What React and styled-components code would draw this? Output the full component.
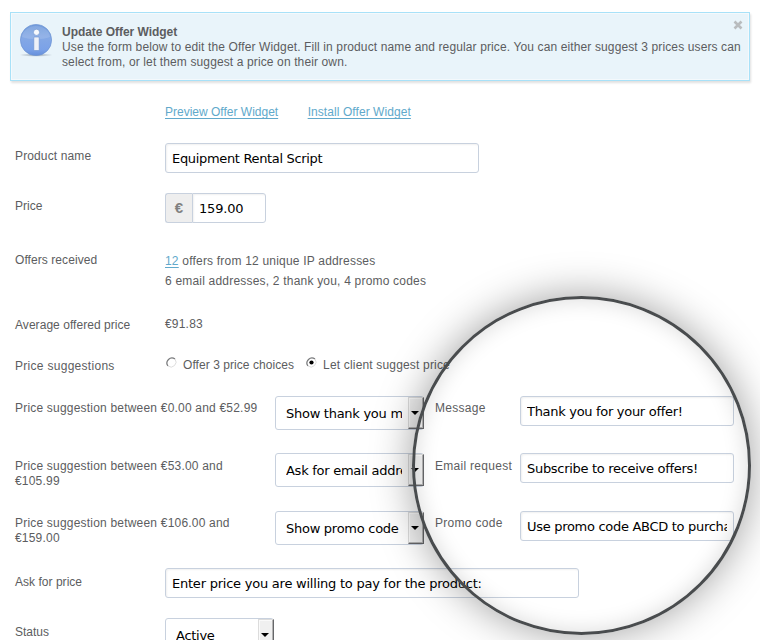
import React from 'react';
import styled, { createGlobalStyle } from 'styled-components';

const GlobalStyle = createGlobalStyle`
* {
  box-sizing: border-box;
}
body {
  margin: 0;
  background-color: #fff;
}
`
const Page = styled.div`
position: relative;
width: 760px;
height: 640px;
overflow: hidden;
padding: 12px 10px 0;
font-family: 'Liberation Sans', Arial, sans-serif;
font-size: 12px;
line-height: 15px;
color: #5c5d60;
`
const Notice = styled.div`
display: flex;
width: 740px;
height: 69px;
padding: 11px 6px 0 9px;
background-color: #e9f4fa;
border: 1px solid #a8e1f8;
box-shadow: inset 0 0 0 1px #f4f9fc, 1px 2px 2px rgba(0, 0, 0, 0.12);
`
const NoticeText = styled.div`
flex: 1;
padding: 1px 0 0 8px;
white-space: nowrap;
`
const NoticeLine = styled.p`
margin: 0;
letter-spacing: 0.122px;
`
const NoticeTitle = styled.h6`
margin: 0;
font-size: 12px;
font-weight: bold;
letter-spacing: -0.04px;
`
const Close = styled.button`
display: flex;
align-self: flex-start;
margin-top: -4px;
margin-left: -14px;
padding: 0;
border: 0;
background-color: transparent;
cursor: pointer;
`
const Link = styled.a`
color: #61a9cb;
letter-spacing: ${(p) => p.$spacing || 0}px;
text-decoration: underline;
text-underline-offset: 2px;
cursor: pointer;
`
const Links = styled.div`
display: flex;
gap: 29.5px;
height: 62px;
padding: 24px 0 0 155px;
`
const Row = styled.div`
display: flex;
align-items: flex-start;
height: ${(p) => p.$height}px;
padding-left: 5px;
`
const Label = styled.label`
flex: none;
width: ${(p) => p.$width || 150}px;
padding-top: ${(p) => (p.$top === undefined ? 6 : p.$top)}px;
letter-spacing: ${(p) => p.$spacing || 0}px;
`
const RangeLabel = styled(Label)`
padding-right: 14px;
`
const Value = styled.div`
letter-spacing: 0.2px;
line-height: 20px;
white-space: nowrap;
`
const Input = styled.input`
width: ${(p) => p.$width}px;
height: 30px;
padding: 1px 6px 0;
border: 1px solid #c8d1de;
border-radius: ${(p) => (p.$joined ? '0 3px 3px 0' : '3px')};
background-color: #fff;
box-shadow: inset 1px 1px 2px rgba(0, 0, 0, 0.06);
color: #000;
font-family: 'DejaVu Sans', Verdana, sans-serif;
font-size: 13px;
letter-spacing: ${(p) => p.$spacing || -0.33}px;
outline: none;
`
const Currency = styled.span`
width: 27px;
height: 30px;
border: 1px solid #c8d1de;
border-right: 0;
border-radius: 3px 0 0 3px;
background-color: #eee;
color: #808080;
font-size: 15px;
font-weight: bold;
line-height: 28px;
text-align: center;
`
const Radios = styled.div`
display: flex;
gap: 11px;
white-space: nowrap;
`
const Radio = styled.label`
display: flex;
gap: 5px;
letter-spacing: ${(p) => p.$spacing}px;
line-height: 18px;
`
const Select = styled.div`
display: flex;
flex: none;
width: ${(p) => p.$width}px;
height: 34px;
border: 1px solid #c8d1de;
border-radius: 3px;
background-color: #fff;
cursor: pointer;
`
const Selected = styled.span`
flex: 1;
min-width: 0;
margin: 0 6px 0 10px;
overflow: hidden;
color: #000;
font-family: 'DejaVu Sans', Verdana, sans-serif;
font-size: 13px;
letter-spacing: -0.27px;
line-height: 33px;
white-space: nowrap;
`
const Arrow = styled.span`
display: flex;
align-items: center;
justify-content: center;
width: 16px;
height: 32px;
margin-right: -1px;
padding-right: 2px;
border: 1px solid #dcdcdc;
border-right: 1px solid #66676a;
border-bottom: 1px solid #66676a;
box-shadow: inset -1px -1px 0 #b4b4b4, inset 1px 1px 0 #fafafa;
background-color: #f0f0f0;
`
const Side = styled.div`
display: flex;
padding-left: 11px;
`
/* magnifier ring over the message fields */
const Ring = styled.div`
position: absolute;
top: 296px;
left: 412px;
width: 339px;
height: 339px;
border: 3px solid #494c4e;
border-radius: 50%;
box-shadow: 0 0 42px rgba(0, 0, 0, 0.38), inset 0 0 22px rgba(0, 0, 0, 0.15);
pointer-events: none;
`

const InfoIcon = () => (
  <svg width="34" height="34" viewBox="0 0 34 34">
    <defs>
      <linearGradient id="ball" x1="0" y1="0" x2="0" y2="1">
        <stop offset="0" stopColor="#719bdb" />
        <stop offset="0.4" stopColor="#85a9e5" />
        <stop offset="0.8" stopColor="#7ba2e8" />
        <stop offset="1" stopColor="#658fda" />
      </linearGradient>
      <radialGradient id="floor">
        <stop offset="0" stopColor="#6f7c8c" stopOpacity="0.7" />
        <stop offset="1" stopColor="#6f7c8c" stopOpacity="0" />
      </radialGradient>
    </defs>
    <ellipse cx="16" cy="31" rx="17" ry="1.8" fill="url(#floor)" />
    <circle cx="16" cy="16" r="15.6" fill="url(#ball)" stroke="#6d94d2" strokeWidth="0.7" />
    <path d="M2 13C3 6 9 2 16 2s13 4 14 11c-8 3-20 3-28 0z" fill="#fff" opacity="0.12" />
    <circle cx="16.5" cy="8.3" r="3.1" fill="#f7f9fd" stroke="#668fcd" strokeWidth="0.6" />
    <rect x="13.8" y="13" width="5.4" height="13.5" rx="0.8" fill="#eef1f8" stroke="#668fcd" strokeWidth="0.6" />
  </svg>
)

const RadioDot = ({ checked }) => (
  <svg width="13" height="13" viewBox="0 0 13 13">
    <circle cx="6.5" cy="6.5" r="5" fill="#fff" />
    <path d="M3 10A5 5 0 0 1 10 3" fill="none" stroke="#77787a" strokeWidth="1.2" />
    <path d="M3 10A5 5 0 0 0 10 3" fill="none" stroke="#dedede" strokeWidth="1" />
    {checked && <circle cx="6.5" cy="6.5" r="2.1" fill="#000" />}
  </svg>
)

const Dropdown = ({ width, children }) => (
  <Select $width={width}>
    <Selected>{children}</Selected>
    <Arrow>
      <svg width="8" height="4" viewBox="0 0 8 4">
        <path d="M0 0h8L4 4z" fill="#000" />
      </svg>
    </Arrow>
  </Select>
)

const suggestions = [
  { range: 'Price suggestion between €0.00 and €52.99', action: 'Show thank you message', label: 'Message', text: 'Thank you for your offer!', height: 57, top: 5 },
  { range: 'Price suggestion between €53.00 and €105.99', action: 'Ask for email address', label: 'Email request', text: 'Subscribe to receive offers!', height: 58, top: 6 },
  { range: 'Price suggestion between €106.00 and €159.00', action: 'Show promo code', label: 'Promo code', text: 'Use promo code ABCD to purchase', height: 57, top: 5 },
]

const App = () => {
  return (
    <Page>
      <GlobalStyle />
      <Notice>
        <InfoIcon />
        <NoticeText>
          <NoticeTitle>Update Offer Widget</NoticeTitle>
          <NoticeLine>Use the form below to edit the Offer Widget. Fill in product name and regular price. You can either suggest 3 prices users can</NoticeLine>
          <NoticeLine>select from, or let them suggest a price on their own.</NoticeLine>
        </NoticeText>
        <Close>
          <svg width="10" height="10" viewBox="0 0 10 10">
            <path d="M1.5 1.5l7 7M8.5 1.5l-7 7" stroke="#b9bcbe" strokeWidth="2.6" />
          </svg>
        </Close>
      </Notice>
      <Links>
        <Link>Preview Offer Widget</Link>
        <Link $spacing={0.07}>Install Offer Widget</Link>
      </Links>
      <Row $height={50}>
        <Label $spacing={0.13}>Product name</Label>
        <Input $width={314} defaultValue="Equipment Rental Script" />
      </Row>
      <Row $height={58}>
        <Label>Price</Label>
        <Currency>€</Currency>
        <Input $width={74} $joined $spacing={-0.2} defaultValue="159.00" />
      </Row>
      <Row $height={63}>
        <Label $top={2} $spacing={0.07}>Offers received</Label>
        <Value>
          <div><Link $spacing={0.2}>12</Link> offers from 12 unique IP addresses</div>
          <div>6 email addresses, 2 thank you, 4 promo codes</div>
        </Value>
      </Row>
      <Row $height={42}>
        <Label $top={4} $spacing={0.05}>Average offered price</Label>
        <Value>€91.83</Value>
      </Row>
      <Row $height={40}>
        <Label $top={3} $spacing={0.29}>Price suggestions</Label>
        <Radios>
          <Radio $spacing={0.06}><RadioDot />Offer 3 price choices</Radio>
          <Radio $spacing={0.17}><RadioDot checked />Let client suggest price</Radio>
        </Radios>
      </Row>
      {suggestions.map((s) => (
        <Row key={s.label} $height={s.height}>
          <RangeLabel $width={260} $top={s.top} $spacing={0.2}>{s.range}</RangeLabel>
          <Dropdown width={149}>{s.action}</Dropdown>
          <Side>
            <Label $width={85} $top={s.top} $spacing={0.29}>{s.label}</Label>
            <Input $width={214} $spacing={-0.3} defaultValue={s.text} />
          </Side>
        </Row>
      ))}
      <Row $height={50}>
        <Label $top={7} $spacing={0.03}>Ask for price</Label>
        <Input $width={414} $spacing={-0.23} defaultValue="Enter price you are willing to pay for the product:" />
      </Row>
      <Row $height={34}>
        <Label $top={7}>Status</Label>
        <Dropdown width={109}>Active</Dropdown>
      </Row>
      <Ring />
    </Page>
  )
}

export default App
